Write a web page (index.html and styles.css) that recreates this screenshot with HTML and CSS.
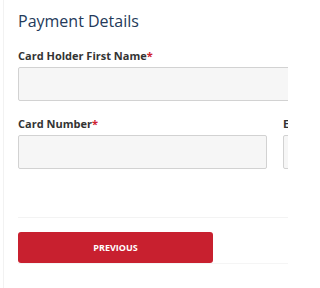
FILE: index.html
```html
<!DOCTYPE html>
<html>
<head>
<meta charset="utf-8">
<link rel="stylesheet" href="styles.css">
</head>
<body>
<div class="viewport">
<div class="page">
  <h2 class="title">Payment Details</h2>
  <div class="field first">
    <label class="label">Card Holder First Name<span class="req">*</span></label>
    <div class="input wide"></div>
  </div>
  <div class="row">
    <div class="field">
      <label class="label">Card Number<span class="req">*</span></label>
      <div class="input"></div>
    </div>
    <div class="field">
      <label class="label">Expiry Date<span class="req">*</span></label>
      <div class="input"></div>
    </div>
  </div>
  <div class="separator"></div>
  <div class="actions">
    <button class="btn">PREVIOUS</button>
  </div>
</div>
</div>
</body>
</html>
```
FILE: styles.css
```css
html, body {
  margin: 0;
  padding: 0;
  background: #fff;
}
.viewport {
  width: 288px;
  height: 288px;
  overflow: hidden;
}
.page {
  margin-left: 3px;
  border-left: 1px solid #f2f2f2;
  padding-left: 14px;
  padding-top: 11px;
  height: 288px;
  box-sizing: border-box;
  width: 700px;
  font-family: "Open Sans", sans-serif;
}
.title {
  margin: 0;
  font-size: 16px;
  line-height: 20px;
  font-weight: 400;
  color: #243a5a;
}
.field {
  display: flex;
  flex-direction: column;
}
.field.first {
  margin-top: 17px;
}
.label {
  font-size: 11px;
  line-height: 16px;
  font-weight: 700;
  color: #333;
  margin-bottom: 3px;
  white-space: nowrap;
}
.req {
  color: #d0202f;
}
.input {
  height: 34px;
  box-sizing: border-box;
  border: 1px solid #d2d2d2;
  border-radius: 2px;
  background: #f6f6f6;
}
.input.wide {
  width: 500px;
}
.row {
  display: grid;
  grid-template-columns: 249px 249px;
  column-gap: 16px;
  margin-top: 15px;
}
.separator {
  margin-top: 48px;
  height: 1px;
  background: #f3f3f3;
}
.actions {
  padding-top: 14px;
  border-bottom: 1px solid #f5f5f5;
  display: flex;
}
.btn {
  width: 195px;
  height: 31px;
  border: none;
  border-radius: 3px;
  background: #c8202f;
  color: #fff;
  font-family: "Open Sans", sans-serif;
  font-weight: 700;
  font-size: 9px;
  padding: 0;
}
```
